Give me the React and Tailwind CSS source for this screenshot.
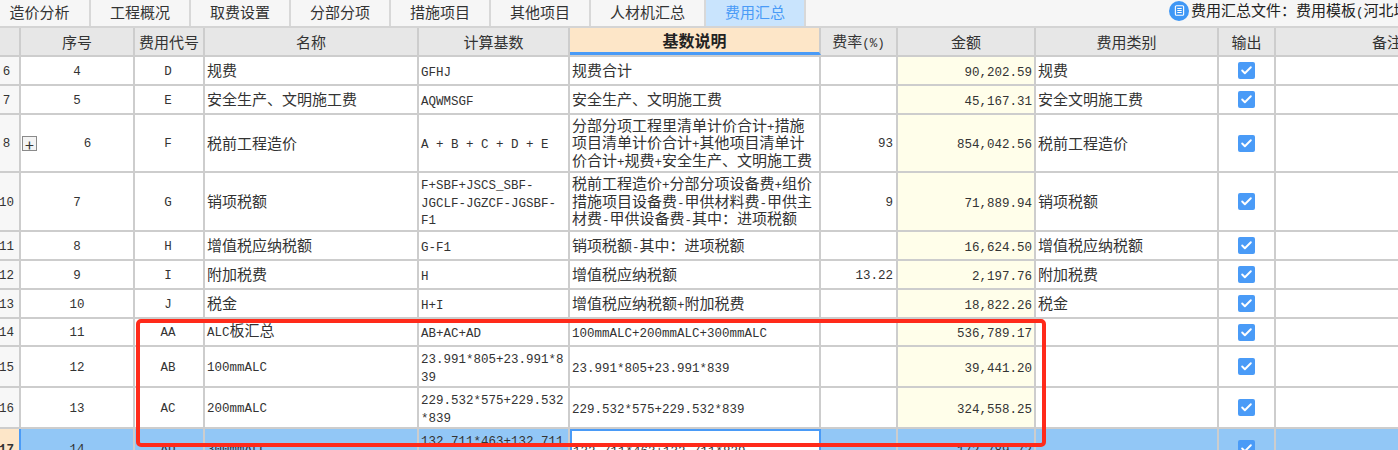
import { Check } from "lucide-react";

const TABS = ["造价分析", "工程概况", "取费设置", "分部分项", "措施项目", "其他项目", "人材机汇总", "费用汇总"];
const TAB_WIDTHS = ["w-[91px] pr-[10px]", "w-[100px]", "w-[100px]", "w-[100px]", "w-[100px]", "w-[100px]", "w-[115px]", "w-[100px]"];

const COLS = ["w-[21px]", "w-[114px]", "w-[70px]", "w-[214px]", "w-[151px]", "w-[251px]", "w-[77px]", "w-[138px]", "w-[183px]", "w-[57px]", "flex-1"];
const HEADS = ["", "序号", "费用代号", "名称", "计算基数", "基数说明", "费率(%)", "金额", "费用类别", "输出", "备注"];

const ROWS = [
  { h: "h-[29px]", no: "6", seq: "4", code: "D", name: "规费", base: ["GFHJ"], desc: ["规费合计"], money: "90,202.59", type: "规费" },
  { h: "h-[29px]", no: "7", seq: "5", code: "E", name: "安全生产、文明施工费", base: ["AQWMSGF"], desc: ["安全生产、文明施工费"], money: "45,167.31", type: "安全文明施工费" },
  {
    h: "h-[58px]", no: "8", seq: "6", code: "F", name: "税前工程造价", base: ["A + B + C + D + E"], plus: true,
    desc: ["分部分项工程里清单计价合计+措施", "项目清单计价合计+其他项目清单计", "价合计+规费+安全生产、文明施工费"],
    rate: "93", money: "854,042.56", type: "税前工程造价",
  },
  {
    h: "h-[59px]", no: "10", seq: "7", code: "G", name: "销项税额", base: ["F+SBF+JSCS_SBF-", "JGCLF-JGZCF-JGSBF-", "F1"],
    desc: ["税前工程造价+分部分项设备费+组价", "措施项目设备费-甲供材料费-甲供主", "材费-甲供设备费-其中：进项税额"],
    rate: "9", money: "71,889.94", type: "销项税额",
  },
  { h: "h-[29px]", no: "11", seq: "8", code: "H", name: "增值税应纳税额", base: ["G-F1"], desc: ["销项税额-其中：进项税额"], money: "16,624.50", type: "增值税应纳税额" },
  { h: "h-[29px]", no: "12", seq: "9", code: "I", name: "附加税费", base: ["H"], desc: ["增值税应纳税额"], rate: "13.22", money: "2,197.76", type: "附加税费" },
  { h: "h-[29px]", no: "13", seq: "10", code: "J", name: "税金", base: ["H+I"], desc: ["增值税应纳税额+附加税费"], money: "18,822.26", type: "税金" },
  { h: "h-[28px]", no: "14", seq: "11", code: "AA", name: "ALC板汇总", base: ["AB+AC+AD"], desc: ["100mmALC+200mmALC+300mmALC"], money: "536,789.17" },
  { h: "h-[41px]", no: "15", seq: "12", code: "AB", name: "100mmALC", base: ["23.991*805+23.991*8", "39"], desc: ["23.991*805+23.991*839"], money: "39,441.20" },
  { h: "h-[41px]", no: "16", seq: "13", code: "AC", name: "200mmALC", base: ["229.532*575+229.532", "*839"], desc: ["229.532*575+229.532*839"], money: "324,558.25" },
  {
    h: "h-[41px]", no: "17", seq: "14", code: "AD", name: "300mmALC", base: ["132.711*463+132.711", "*839"], desc: ["132.711*463+132.711*839"],
    money: "172,789.72", selected: true,
  },
];

// latin runs are half the width of the CJK ones, as in the original bitmap font
function T({ children }) {
  return (
    <span>
      {String(children)
        .split(/([\x00-\x7f]+)/)
        .filter(Boolean)
        .map((part, i) =>
          /^[\x00-\x7f]/.test(part) ? (
            <span key={i} className="font-['Liberation_Mono',monospace] text-[12.5px]">{part}</span>
          ) : (
            <span key={i}>{part}</span>
          )
        )}
    </span>
  );
}

function Tick() {
  return (
    <span className="flex h-[17px] w-[17px] items-center justify-center rounded-[2px] bg-[#4a9bf7]">
      <Check className="h-[13px] w-[13px] text-white" strokeWidth={3.5} />
    </span>
  );
}

function Cell({ col, className = "", children }) {
  return (
    <div className={`${COLS[col]} flex shrink-0 items-center overflow-hidden whitespace-pre border-r-2 border-[#cdcdcd] ${className}`}>
      {children}
    </div>
  );
}

function Lines({ lines }) {
  return (
    <div className="flex flex-col">
      {lines.map((line) => (
        <div key={line} className="h-[17.5px] leading-[17.5px]"><T>{line}</T></div>
      ))}
    </div>
  );
}

function Row({ row }) {
  const sel = row.selected;
  return (
    <div className={`${row.h} flex shrink-0 border-b-2 border-[#cdcdcd] ${sel ? "bg-[#92c7f6]" : "bg-white"}`}>
      <Cell col={0} className={`justify-center pb-[2px] pr-[6px] ${sel ? "border-r-[#4a9bf7]! bg-[#fde6c8] font-bold" : "bg-[#f7f7f7]"}`}>
        <T>{row.no}</T>
      </Cell>
      <Cell col={1} className="relative justify-center pb-[2px]">
        {row.plus ? (
          <span className="absolute left-[1px] top-[21px] flex h-[15px] w-[15px] items-center justify-center border border-[#8a8a8a] bg-[#f4f4f4] text-[16px] leading-none">+</span>
        ) : null}
        <span className={row.plus ? "pl-[21px]" : ""}><T>{row.seq}</T></span>
      </Cell>
      <Cell col={2} className="justify-center pb-[2px] pr-[2px]"><T>{row.code}</T></Cell>
      <Cell col={3} className="pb-[2px] pl-[2px]"><T>{row.name}</T></Cell>
      <Cell col={4} className="pb-[2px] pl-[2px]"><Lines lines={row.base} /></Cell>
      <Cell col={5} className={sel ? "relative border-2 border-[#4a9bf7]! bg-white pl-[1px]" : "pb-[2px] pl-[2px]"}>
        <Lines lines={row.desc} />
        {sel ? <span className="absolute right-[3px] top-[13px] text-[#777]"><T>...</T></span> : null}
      </Cell>
      <Cell col={6} className="justify-end pb-[2px] pr-[3px]"><T>{row.rate ?? ""}</T></Cell>
      <Cell col={7} className={`justify-end pr-[2px] ${sel ? "" : "bg-[#fffeea]"}`}><T>{row.money}</T></Cell>
      <Cell col={8} className="pb-[2px] pl-[2px]"><T>{row.type ?? ""}</T></Cell>
      <Cell col={9} className="justify-center"><Tick /></Cell>
      <div className="flex-1" />
    </div>
  );
}

export default function App() {
  return (
    <div className="relative h-[450px] w-[1398px] overflow-hidden bg-white font-['Noto_Sans_CJK_SC',sans-serif] text-[15px] leading-none text-[#333]">
      <div className="flex h-[28px] border-b-2 border-[#d4d4d4] bg-[#f6f6f6]">
        {TABS.map((tab, i) => (
          <div
            key={tab}
            className={`${TAB_WIDTHS[i]} flex items-center justify-center border-r-2 border-[#d8d8d8] pb-[4px] ${tab === "费用汇总" ? "bg-[#c9e4fd] text-[#4a9bf7]" : ""}`}
          >
            {tab}
          </div>
        ))}
        <div className="ml-auto flex w-[229px] shrink-0 items-center gap-[2px] overflow-hidden whitespace-nowrap pb-[5px]">
          <span className="flex h-[20px] w-[20px] shrink-0 items-center justify-center rounded-full bg-[#3f97f5]">
            <svg viewBox="0 0 12 12" className="h-[11px] w-[11px]" fill="none" stroke="#fff" strokeWidth="1.2">
              <rect x="1.5" y="0.8" width="9" height="10.4" rx="1.2" />
              <path d="M3.6 3.8h4.8M3.6 6h4.8M3.6 8.2h4.8" />
            </svg>
          </span>
          <span className="text-[#222]"><T>费用汇总文件：费用模板(河北增值</T></span>
        </div>
      </div>

      <div className="flex h-[29px] border-b-2 border-[#cdcdcd] bg-[#e7e7e7]">
        {HEADS.map((head, i) =>
          i === 10 ? (
            <div key={head} className="flex w-[222px] shrink-0 items-center justify-center">{head}</div>
          ) : (
            <Cell
              key={i}
              col={i}
              className={`justify-center ${i === 5 ? "border-b-[3px] border-b-[#4a9bf7]! bg-[#fde6c8] text-[16px] font-bold text-[#222]" : ""}`}
            >
              <T>{head}</T>
            </Cell>
          )
        )}
      </div>

      {ROWS.map((row) => (
        <Row key={row.no} row={row} />
      ))}

      {/* red annotation drawn over the table */}
      <div className="absolute left-[136px] top-[319px] h-[128px] w-[910px] rounded-[5px] border-[4px] border-[#ff2a1a]" />
    </div>
  );
}
